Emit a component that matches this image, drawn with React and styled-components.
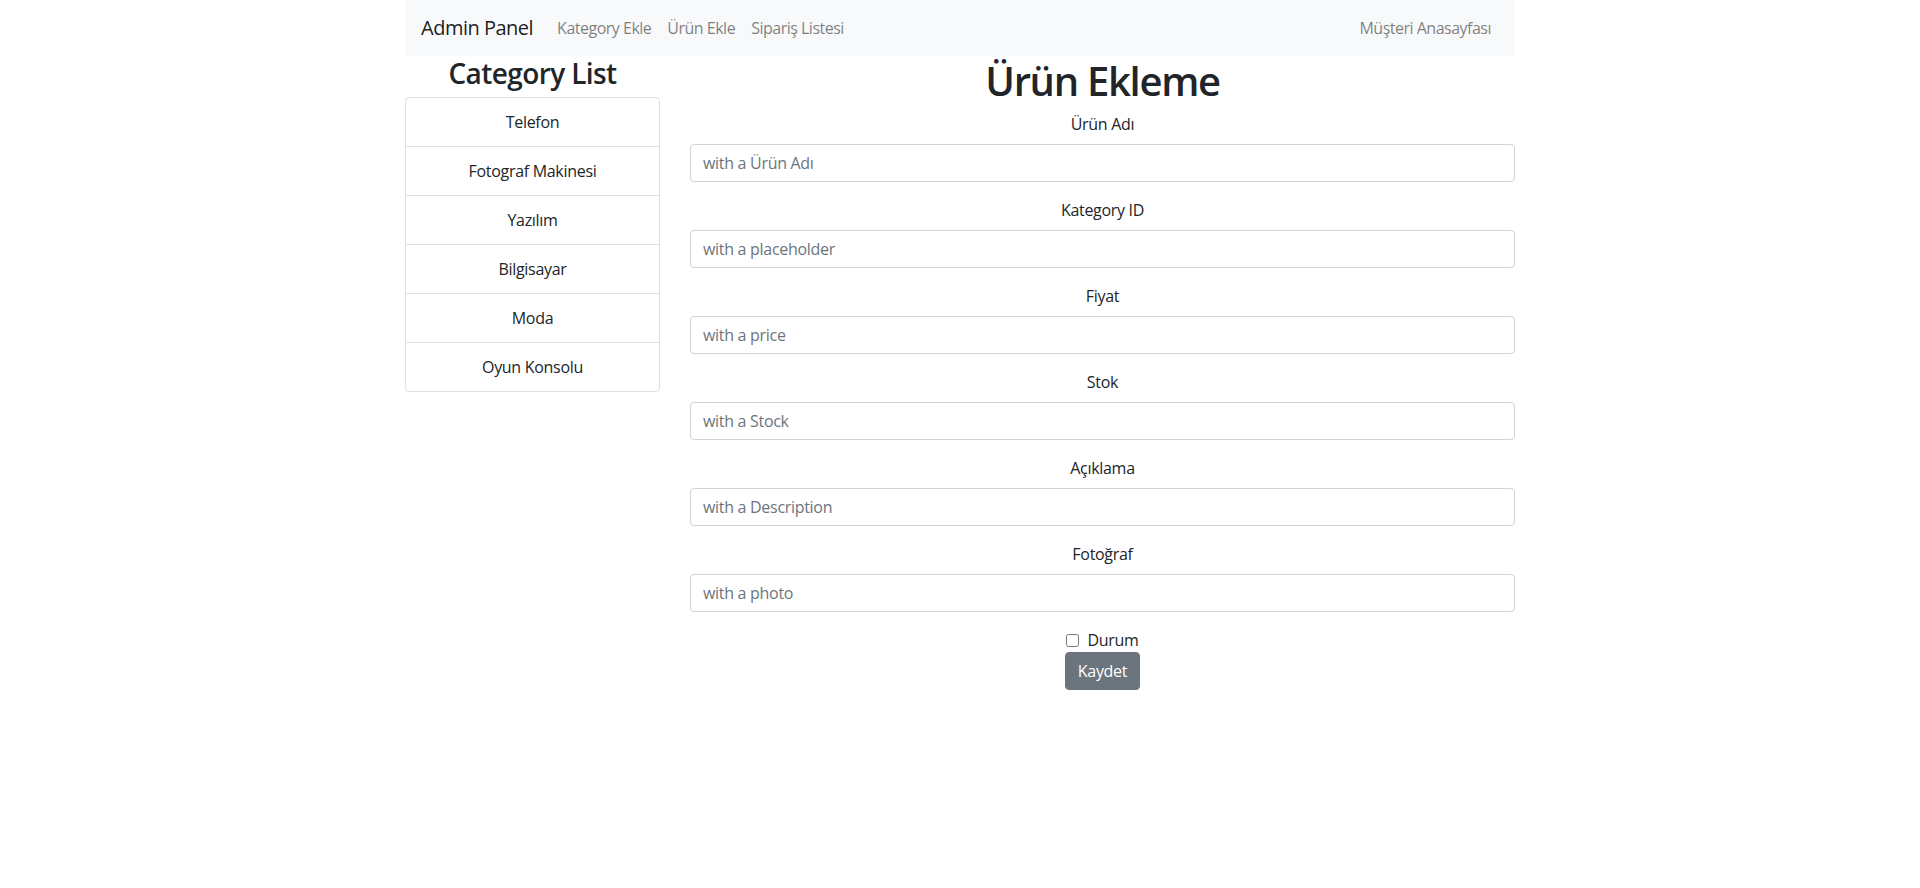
import React from "react";
import styled, { createGlobalStyle } from "styled-components";

const GlobalStyle = createGlobalStyle`
  * {
    box-sizing: border-box;
  }

  body {
    margin: 0;
    font-family: "Open Sans", "Noto Sans", sans-serif;
    font-size: 16px;
    line-height: 1.5;
    color: #212529;
    background-color: #fff;
  }
`;

const Container = styled.div`
  width: 1140px;
  margin: 0 auto;
  padding: 0 15px;
`;

const Navbar = styled.nav`
  display: flex;
  align-items: center;
  justify-content: space-between;
  height: 56px;
  padding: 0 16px;
  background-color: #f8f9fa;
`;

const NavLeft = styled.div`
  display: flex;
  align-items: center;
`;

const Brand = styled.a`
  font-size: 20px;
  line-height: 30px;
  margin-right: 16px;
  color: rgba(0, 0, 0, 0.9);
  text-decoration: none;
  letter-spacing: -0.5px;
`;

const NavLink = styled.a`
  padding: 8px;
  font-size: 16px;
  color: rgba(0, 0, 0, 0.5);
  text-decoration: none;
  letter-spacing: -0.5px;
`;

const Row = styled.div`
  display: flex;
  margin: 0 -15px;
`;

const Col = styled.div`
  flex: 0 0 ${(props) => props.size}%;
  max-width: ${(props) => props.size}%;
  padding: 0 15px;
`;

const SideTitle = styled.h3`
  margin: 0 0 8px 0;
  padding-top: 2px;
  font-size: 28px;
  line-height: 31px;
  font-weight: 600;
  text-align: center;
  letter-spacing: -0.6px;
`;

const ListGroup = styled.ul`
  margin: 0;
  padding: 0;
  list-style: none;
  border: 1px solid rgba(0, 0, 0, 0.125);
  border-radius: 4px;
`;

const ListItem = styled.li`
  padding: 12px 20px;
  text-align: center;
  color: #212529;
  letter-spacing: -0.3px;
  border-top: 1px solid rgba(0, 0, 0, 0.125);

  &:first-child {
    border-top: none;
  }
`;

const PageTitle = styled.h1`
  margin: 0 0 8px 0;
  padding-top: 2px;
  font-size: 40px;
  line-height: 46px;
  font-weight: 600;
  text-align: center;
  letter-spacing: -1.3px;
`;

const Form = styled.form`
  text-align: center;
`;

const FormGroup = styled.div`
  margin-bottom: 16px;
`;

const Label = styled.label`
  display: inline-block;
  margin-bottom: 8px;
  letter-spacing: -0.3px;
`;

const Input = styled.input`
  display: block;
  width: 100%;
  height: 38px;
  padding: 6px 12px;
  font-family: inherit;
  font-size: 16px;
  line-height: 1.5;
  color: #495057;
  background-color: #fff;
  border: 1px solid #ced4da;
  border-radius: 4px;
  letter-spacing: -0.3px;

  &::placeholder {
    color: #6c757d;
    opacity: 1;
  }
`;

const CheckRow = styled.div`
  display: flex;
  justify-content: center;
  align-items: center;
  height: 24px;
  gap: 8px;
`;

const CheckBox = styled.input`
  width: 13px;
  height: 13px;
  margin: 0;
`;

const CheckLabel = styled.label`
  letter-spacing: -0.3px;
`;

const Button = styled.button`
  display: inline-block;
  height: 38px;
  padding: 6px 12px;
  font-family: inherit;
  font-size: 16px;
  line-height: 1.5;
  color: #fff;
  background-color: #6c757d;
  border: 1px solid #6c757d;
  border-radius: 4px;
  letter-spacing: -0.3px;
  cursor: pointer;
`;

const categories = [
  "Telefon",
  "Fotograf Makinesi",
  "Yazılım",
  "Bilgisayar",
  "Moda",
  "Oyun Konsolu",
];

const fields = [
  { label: "Ürün Adı", placeholder: "with a Ürün Adı" },
  { label: "Kategory ID", placeholder: "with a placeholder" },
  { label: "Fiyat", placeholder: "with a price" },
  { label: "Stok", placeholder: "with a Stock" },
  { label: "Açıklama", placeholder: "with a Description" },
  { label: "Fotoğraf", placeholder: "with a photo" },
];

const App = () => {
  return (
    <>
      <GlobalStyle />
      <Container>
        <Navbar>
          <NavLeft>
            <Brand href="#">Admin Panel</Brand>
            <NavLink href="#">Kategory Ekle</NavLink>
            <NavLink href="#">Ürün Ekle</NavLink>
            <NavLink href="#">Sipariş Listesi</NavLink>
          </NavLeft>
          <NavLink href="#">Müşteri Anasayfası</NavLink>
        </Navbar>
        <Row>
          <Col size={25}>
            <SideTitle>Category List</SideTitle>
            <ListGroup>
              {categories.map((name) => (
                <ListItem key={name}>{name}</ListItem>
              ))}
            </ListGroup>
          </Col>
          <Col size={75}>
            <PageTitle>Ürün Ekleme</PageTitle>
            <Form onSubmit={(e) => e.preventDefault()}>
              {fields.map((field) => (
                <FormGroup key={field.label}>
                  <Label>{field.label}</Label>
                  <Input type="text" placeholder={field.placeholder} />
                </FormGroup>
              ))}
              <CheckRow>
                <CheckBox type="checkbox" id="durum" />
                <CheckLabel htmlFor="durum">Durum</CheckLabel>
              </CheckRow>
              <Button type="submit">Kaydet</Button>
            </Form>
          </Col>
        </Row>
      </Container>
    </>
  );
};

export default App;
